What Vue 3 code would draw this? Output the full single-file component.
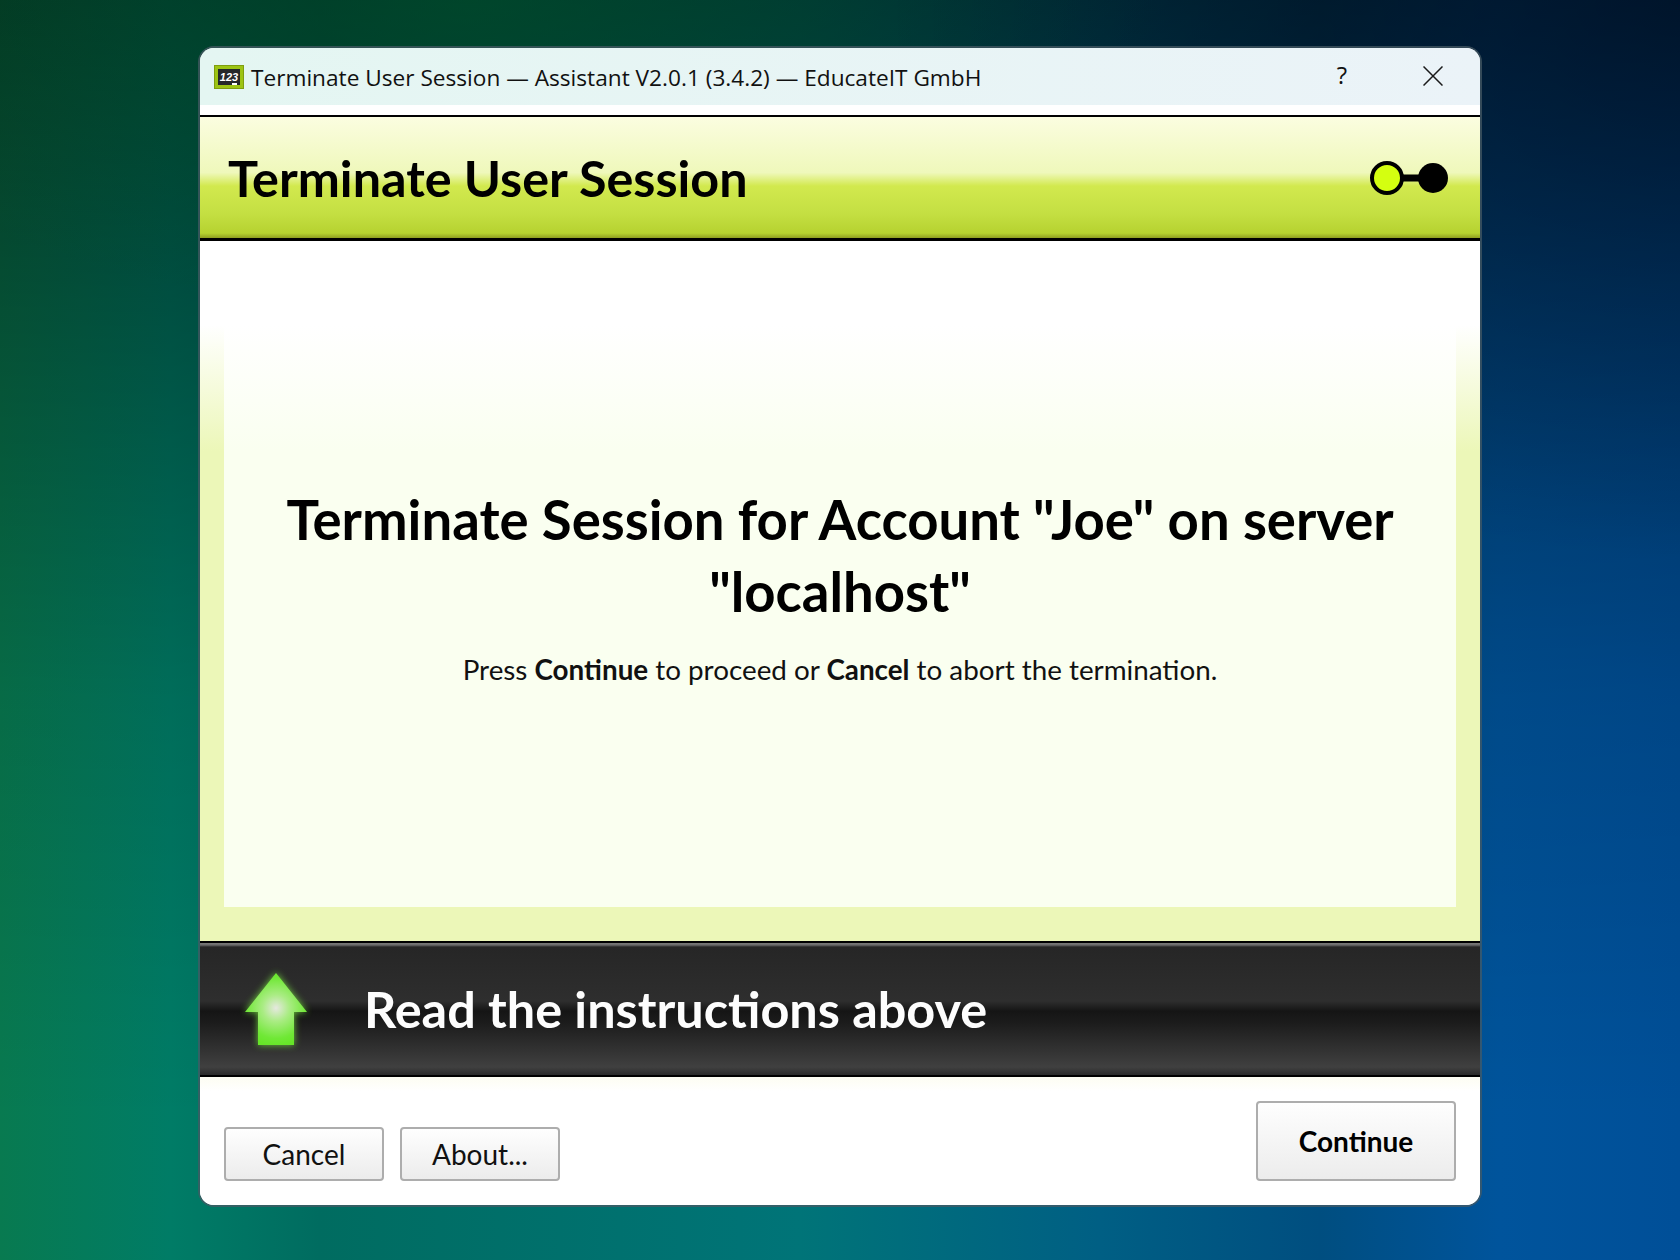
<template>
  <div class="desktop">
    <section class="window">
      <header class="titlebar">
        <svg class="app-icon" width="30" height="24" viewBox="0 0 30 24">
          <rect x="0.5" y="0.5" width="29" height="23" fill="#9dc414" stroke="#7f9e10"/>
          <rect x="4" y="4" width="22" height="16" fill="#26282a"/>
          <text x="15" y="15.5" class="board">123</text>
          <rect x="18" y="18" width="5" height="2" fill="#fff"/>
        </svg>
        <span class="title">Terminate User Session — Assistant V2.0.1 (3.4.2) — EducateIT GmbH</span>
        <span class="help">?</span>
        <svg class="close" width="20" height="20" viewBox="0 0 20 20">
          <path d="M0.5 0.5 L19.5 19.5 M19.5 0.5 L0.5 19.5" stroke="#1a1a1a" stroke-width="1.5" fill="none"/>
        </svg>
      </header>
      <div class="strip"></div>
      <div class="head">
        <h1>Terminate User Session</h1>
        <svg class="steps" width="80" height="36" viewBox="0 0 80 36">
          <rect x="30" y="14.5" width="24" height="7" fill="#000"/>
          <circle cx="18" cy="18" r="15" fill="#d4ff10" stroke="#000" stroke-width="4"/>
          <circle cx="64" cy="18" r="15" fill="#000"/>
        </svg>
      </div>
      <main class="content">
        <div class="panel">
          <h2>Terminate Session for Account "Joe" on server "localhost"</h2>
          <p>Press <b>Continue</b> to proceed or <b>Cancel</b> to abort the termination.</p>
        </div>
      </main>
      <div class="banner">
        <svg class="arrow" width="92" height="100" viewBox="0 0 92 100">
          <defs>
            <radialGradient id="arrowFill" cx="46" cy="45" r="38" gradientUnits="userSpaceOnUse">
              <stop offset="0" stop-color="#e6e8e0"/>
              <stop offset="0.35" stop-color="#aaec84"/>
              <stop offset="0.8" stop-color="#70e836"/>
              <stop offset="1" stop-color="#66e628"/>
            </radialGradient>
            <filter id="arrowGlow" x="-30%" y="-30%" width="160%" height="160%">
              <feGaussianBlur stdDeviation="3.5"/>
            </filter>
          </defs>
          <path class="glow" d="M46 10 L77 49 L64 49 L64 82 L28 82 L28 49 L15 49 Z" filter="url(#arrowGlow)"/>
          <path d="M46 10 L77 49 L64 49 L64 82 L28 82 L28 49 L15 49 Z" fill="url(#arrowFill)"/>
        </svg>
        <span class="banner-text">Read the instructions above</span>
      </div>
      <footer class="footer">
        <button class="btn">Cancel</button>
        <button class="btn">About...</button>
        <button class="btn primary">Continue</button>
      </footer>
    </section>
  </div>
</template>

<script setup>
</script>

<style>
html, body { margin: 0; padding: 0; }
</style>

<style scoped>
.desktop {
  width: 1680px;
  height: 1260px;
  box-sizing: border-box;
  padding: 48px 200px 55px;
  font-family: "Lato", "Open Sans", sans-serif;
  background:
    radial-gradient(ellipse 800px 560px at 100% 0, rgba(0, 0, 10, 0.42), transparent),
    radial-gradient(ellipse 700px 320px at 28% 0, rgba(0, 90, 40, 0.5), transparent),
    linear-gradient(180deg, rgba(0, 0, 0, 0.56) 0, rgba(0, 0, 0, 0.36) 300px, rgba(0, 0, 0, 0.12) 700px, transparent 1120px),
    linear-gradient(90deg, #087a50 0, #007c66 170px, #006c60 320px, #007478 800px, #005f84 1100px, #004e80 1320px, #00549c 1500px, #004f98 100%);
}
.window {
  width: 1280px;
  height: 1157px;
  display: flex;
  flex-direction: column;
  border-radius: 14px;
  overflow: hidden;
  background: #fff;
  box-shadow: 0 0 0 2px rgba(70, 90, 100, 0.75);
}
.titlebar {
  height: 57px;
  flex: none;
  display: flex;
  align-items: center;
  padding-left: 14px;
  background: linear-gradient(90deg, #e4f6f2, #ebf3f8);
  color: #111;
  font-family: "Open Sans", sans-serif;
}
.app-icon { flex: none; }
.board {
  font: italic 700 11px "Liberation Sans", sans-serif;
  fill: #fff;
  text-anchor: middle;
}
.title { margin-left: 7px; margin-top: 2px; font-size: 22.65px; flex: 1; white-space: nowrap; }
.help { font-size: 24px; margin-right: 76px; margin-top: -4px; }
.close { margin-right: 37px; margin-top: -2px; }
.strip { height: 10px; flex: none; background: #fff; }
.head {
  height: 126px;
  flex: none;
  box-sizing: border-box;
  border-top: 2px solid #000;
  border-bottom: 3px solid #000;
  display: flex;
  align-items: center;
  justify-content: space-between;
  padding: 0 30px 0 28px;
  background: linear-gradient(180deg, #fbfde0 0%, #eff8bb 46%, #d2e94e 57%, #c4df42 80%, #b6d230 96%, #8f9e20 100%);
}
h1 { margin: 0; font-size: 50.3px; font-weight: 700; color: #000; }
.steps { flex: none; margin-right: 1px; }
.content {
  height: 700px;
  flex: none;
  box-sizing: border-box;
  padding: 0 24px 34px;
  background: linear-gradient(180deg, #fff 84px, #ecf7b8 210px);
}
.panel {
  height: 100%;
  box-sizing: border-box;
  padding: 25px 50px 0;
  display: flex;
  flex-direction: column;
  align-items: center;
  justify-content: center;
  text-align: center;
  background: linear-gradient(180deg, #fff 84px, #fafff0 210px);
}
h2 { margin: 0; font-size: 54.5px; line-height: 72px; font-weight: 700; color: #000; }
p { margin: 23px 0 0; font-size: 27.8px; line-height: 40px; color: #111; }
.banner {
  height: 136px;
  flex: none;
  box-sizing: border-box;
  display: flex;
  align-items: center;
  border-top: 2px solid #000;
  border-bottom: 2px solid #000;
  background: linear-gradient(180deg, #7a7a7a 0, #6a6a6a 2px, #262626 4px, #2e2e2e 58px, #151515 68px, #1c1c1c 80px, #404040 124px, #2a2a2a 132px);
}
.arrow { flex: none; margin-left: 30px; margin-top: 8px; }
.glow { fill: #7df040; opacity: 0.8; }
.banner-text { margin-left: 42px; margin-top: -2px; font-size: 50.4px; font-weight: 700; color: #fdfdfd; }
.footer {
  flex: 1;
  display: flex;
  align-items: flex-end;
  gap: 16px;
  padding: 0 24px 24px;
  background: linear-gradient(180deg, #fdfdf2 0, #fff 14px);
}
.btn {
  width: 160px;
  height: 54px;
  box-sizing: border-box;
  border: 2px solid #adadad;
  border-radius: 4px;
  padding: 0;
  font-family: "Lato", "Open Sans", sans-serif;
  font-size: 28px;
  color: #111;
  background: linear-gradient(180deg, #fefefe, #ececec);
}
.primary {
  width: 200px;
  height: 80px;
  margin-left: auto;
  font-weight: 700;
  color: #000;
}
</style>
